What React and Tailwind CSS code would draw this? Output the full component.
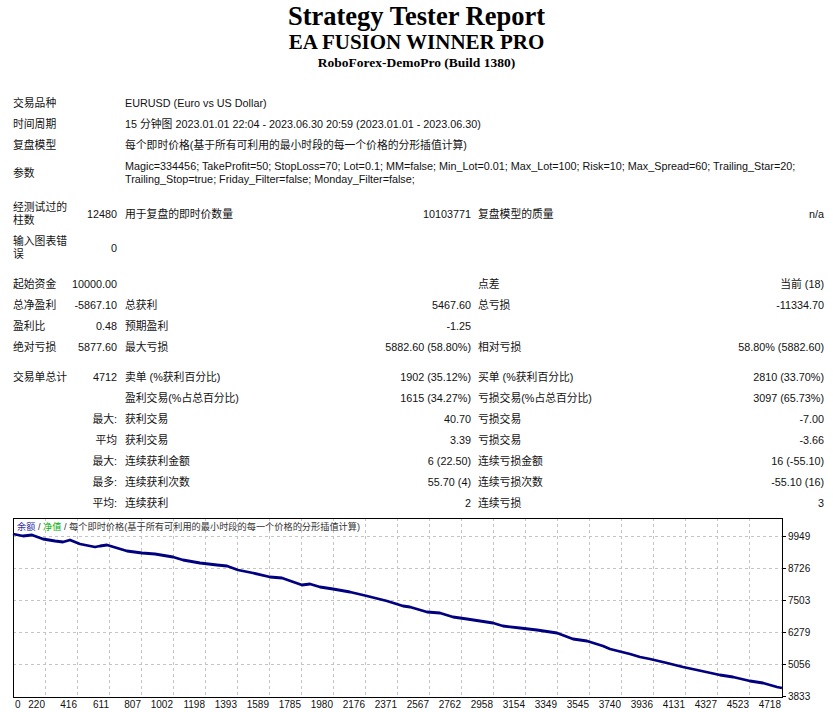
import React from 'react';

const font = { fontFamily: '"Liberation Sans", "Noto Sans CJK SC", sans-serif' };

// equity curve, sampled from the report chart (page coords)
const CURVE = [
  [13, 535], [23, 537], [32, 536], [43, 540], [55, 542], [63, 543], [70, 541], [80, 545],
  [95, 548], [100, 547], [107, 546], [117, 549], [127, 552], [142, 554], [155, 555], [173, 558],
  [183, 561], [200, 564], [217, 566], [227, 567], [238, 571], [253, 574], [270, 578], [282, 579],
  [302, 586], [310, 585], [320, 588], [333, 590], [350, 593], [367, 597], [387, 602], [403, 607],
  [410, 608], [427, 613], [440, 614], [453, 618], [467, 620], [480, 622], [493, 624], [503, 627],
  [520, 629], [537, 631], [557, 634], [573, 640], [587, 642], [603, 647], [610, 650], [630, 655],
  [640, 658], [650, 660], [667, 664], [683, 668], [697, 671], [720, 676], [733, 678], [750, 682],
  [763, 684], [777, 688], [782, 689],
];

const X_LABELS = ['0', '220', '416', '611', '807', '1002', '1198', '1393', '1589', '1785', '1980', '2176', '2371',
  '2567', '2762', '2958', '3154', '3349', '3545', '3740', '3936', '4131', '4327', '4523', '4718'];
const Y_LABELS = ['9949', '8726', '7503', '6279', '5056', '3833'];

function Row({ children }) {
  return <tr className="align-middle">{children}</tr>;
}

function Spacer({ h }) {
  return <tr><td colSpan={6} style={{ height: h }} className="p-0" /></tr>;
}

const L = 'py-[4px] pl-0 pr-0 text-left';
const V = 'py-[4px] pr-[4px] text-right whitespace-nowrap';
const L3 = 'py-[4px] pl-[4px] text-left whitespace-nowrap';
const L5 = 'py-[4px] pl-[3px] text-left whitespace-nowrap';
const V6 = 'py-[4px] pr-0 text-right whitespace-nowrap';

function StatRow({ a, b, c, d, e, f, aRight }) {
  return (
    <Row>
      {aRight ? (
        <td colSpan={2} className={V}>{a}</td>
      ) : (
        <>
          <td className={L}>{a}</td>
          <td className={V}>{b}</td>
        </>
      )}
      <td className={L3}>{c}</td>
      <td className={V}>{d}</td>
      <td className={L5}>{e}</td>
      <td className={V6}>{f}</td>
    </Row>
  );
}

function Chart() {
  const top = 515;
  const pts = CURVE.map(([x, y]) => `${x},${y - top}`).join(' ');
  const vlines = Array.from({ length: 23 }, (_, i) => 13.5 + 32 * (i + 1));
  const hlines = [22, 54, 86, 118, 150];
  return (
    <svg width="833" height="197" className="block" style={font}>
      {vlines.map((x) => (
        <line key={x} x1={x} y1={4} x2={x} y2={183} stroke="#c4c4c4" strokeDasharray="3 3" />
      ))}
      {hlines.map((y) => (
        <line key={y} x1={13} y1={y + 0.5} x2={782} y2={y + 0.5} stroke="#c4c4c4" strokeDasharray="3 3" />
      ))}
      <rect x={13.5} y={4.5} width={769} height={179} fill="none" stroke="#000" />
      {Y_LABELS.map((t, i) => (
        <g key={t}>
          <line x1={783} y1={22.5 + 32 * i} x2={786} y2={22.5 + 32 * i} stroke="#000" />
          <text x={788} y={26 + 32 * i} fontSize="10" fill="#111">{t}</text>
        </g>
      ))}
      {X_LABELS.map((t, i) => (
        i === 0
          ? <text key={t} x={15} y={194} fontSize="10" fill="#111">{t}</text>
          : <text key={t} x={13 + 32 * i} y={194} fontSize="10" fill="#111" textAnchor="end">{t}</text>
      ))}
      <polyline points={pts} fill="none" stroke="#000080" strokeWidth="2.8" strokeLinejoin="round" />
      <text x={17} y={16} fontSize="9.2" fill="#333">
        <tspan fill="#3030a0">余额</tspan>
        <tspan> / </tspan>
        <tspan fill="#00b000">净值</tspan>
        <tspan> / 每个即时价格(基于所有可利用的最小时段的每一个价格的分形插值计算)</tspan>
      </text>
    </svg>
  );
}

export default function App() {
  return (
    <div className="w-[833px] h-[712px] overflow-hidden bg-white text-[#111]" style={font}>
      <div className="text-center font-bold text-black" style={{ fontFamily: '"Liberation Serif", serif' }}>
        <div className="text-[26.5px] leading-[30px] pt-[1px]">Strategy Tester Report</div>
        <div className="text-[21px] leading-[22px]">EA FUSION WINNER PRO</div>
        <div className="text-[13.5px] leading-[20px]">RoboForex-DemoPro (Build 1380)</div>
      </div>

      <div className="pl-[13px] pt-[20px] text-[10.8px] leading-[13px]">
        <table className="table-fixed w-[811px] border-collapse">
          <colgroup>
            <col className="w-[57px]" />
            <col className="w-[51px]" />
            <col className="w-[259px]" />
            <col className="w-[95px]" />
            <col className="w-[225px]" />
            <col className="w-[124px]" />
          </colgroup>
          <tbody>
            <Row>
              <td colSpan={2} className={L}>交易品种</td>
              <td colSpan={4} className={L3}>EURUSD (Euro vs US Dollar)</td>
            </Row>
            <Row>
              <td colSpan={2} className={L}>时间周期</td>
              <td colSpan={4} className={L3}>15 分钟图 2023.01.01 22:04 - 2023.06.30 20:59 (2023.01.01 - 2023.06.30)</td>
            </Row>
            <Row>
              <td colSpan={2} className={L}>复盘模型</td>
              <td colSpan={4} className={L3}>每个即时价格(基于所有可利用的最小时段的每一个价格的分形插值计算)</td>
            </Row>
            <Row>
              <td colSpan={2} className={L}>参数</td>
              <td colSpan={4} className="py-[4px] pl-[4px] text-left">
                Magic=334456; TakeProfit=50; StopLoss=70; Lot=0.1; MM=false; Min_Lot=0.01; Max_Lot=100; Risk=10; Max_Spread=60; Trailing_Star=20;<br />
                Trailing_Stop=true; Friday_Filter=false; Monday_Filter=false;
              </td>
            </Row>
            <Spacer h={7} />
            <StatRow a="经测试过的柱数" b="12480" c="用于复盘的即时价数量" d="10103771" e="复盘模型的质量" f="n/a" />
            <StatRow a="输入图表错误" b="0" c="" d="" e="" f="" />
            <Spacer h={9} />
            <StatRow a="起始资金" b="10000.00" c="" d="" e="点差" f="当前 (18)" />
            <StatRow a="总净盈利" b="-5867.10" c="总获利" d="5467.60" e="总亏损" f="-11334.70" />
            <StatRow a="盈利比" b="0.48" c="预期盈利" d="-1.25" e="" f="" />
            <StatRow a="绝对亏损" b="5877.60" c="最大亏损" d="5882.60 (58.80%)" e="相对亏损" f="58.80% (5882.60)" />
            <Spacer h={9} />
            <StatRow a="交易单总计" b="4712" c="卖单 (%获利百分比)" d="1902 (35.12%)" e="买单 (%获利百分比)" f="2810 (33.70%)" />
            <StatRow a="" b="" c="盈利交易(%占总百分比)" d="1615 (34.27%)" e="亏损交易(%占总百分比)" f="3097 (65.73%)" />
            <StatRow aRight a="最大:" c="获利交易" d="40.70" e="亏损交易" f="-7.00" />
            <StatRow aRight a="平均" c="获利交易" d="3.39" e="亏损交易" f="-3.66" />
            <StatRow aRight a="最大:" c="连续获利金额" d="6 (22.50)" e="连续亏损金额" f="16 (-55.10)" />
            <StatRow aRight a="最多:" c="连续获利次数" d="55.70 (4)" e="连续亏损次数" f="-55.10 (16)" />
            <StatRow aRight a="平均:" c="连续获利" d="2" e="连续亏损" f="3" />
          </tbody>
        </table>
      </div>

      <Chart />
    </div>
  );
}
